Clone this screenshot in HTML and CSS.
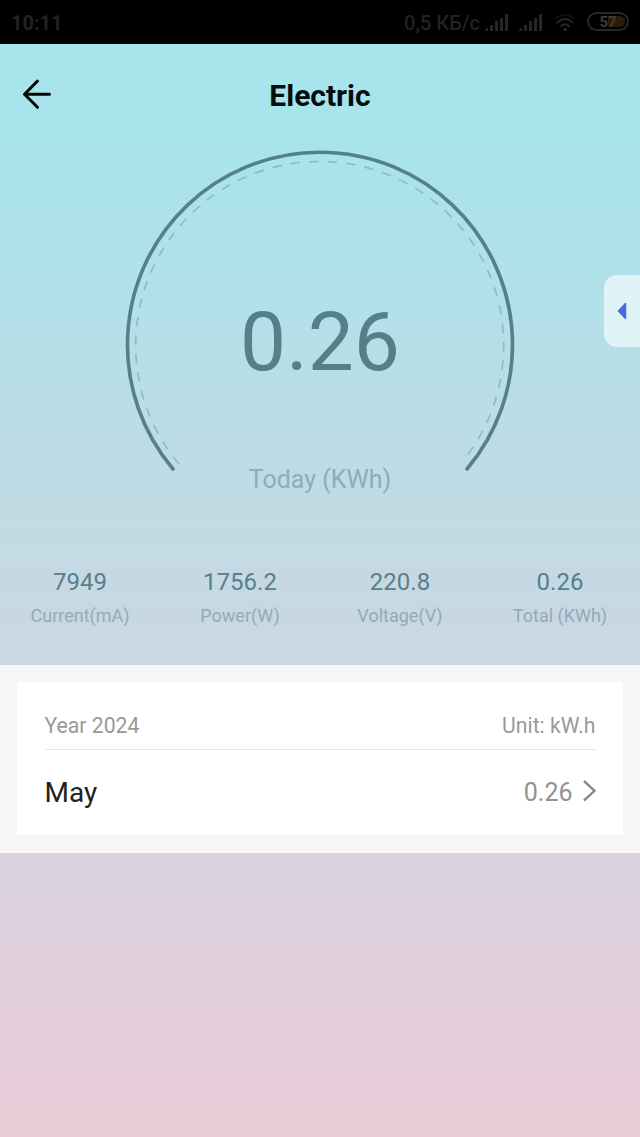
FILE: index.html
```html
<!DOCTYPE html>
<html>
<head>
<meta charset="utf-8">
<meta name="viewport" content="width=device-width, initial-scale=1">
<title>Electric</title>
<link rel="stylesheet" href="styles.css">
</head>
<body>

<div class="status">
  <span class="time">10:11</span>
  <span class="speed">0,5 КБ/с</span>
  <svg class="signal" width="26" height="18" viewBox="0 0 26 18">
    <path d="M0 17l4-4v4zM6 11h3v6H6zM11 7h3v10h-3zM16 4h3v13h-3zM21 0h3v17h-3z"/>
  </svg>
  <svg class="signal second" width="26" height="18" viewBox="0 0 26 18">
    <path d="M0 17l4-4v4zM6 11h3v6H6zM11 7h3v10h-3zM16 4h3v13h-3zM21 0h3v17h-3z"/>
  </svg>
  <svg class="wifi" width="22" height="18" viewBox="0 0 22 18">
    <path class="faint" d="M1 5Q11-3 21 5"/>
    <path d="M3 9Q11 1 19 9M6.500 12.500Q11 8 15.500 12.500"/>
    <circle cx="11" cy="15.500" r="1.700"/>
  </svg>
  <div class="battery"><span class="level">57</span></div>
</div>

<div class="header">
  <svg class="back" width="30" height="32" viewBox="0 0 30 32">
    <path d="M15.500 3L2.500 16.300l13 13M2.500 16.300h25"/>
  </svg>
  <h1>Electric</h1>
</div>

<div class="gauge">
  <svg class="dial" width="400" height="340" viewBox="0 0 400 340">
    <path class="ring" d="M53 323A192.500 192.500 0 1 1 347 323"/>
    <path class="dashes" d="M59 318A184 184 0 1 1 344.500 313"/>
  </svg>
  <div class="today">0.26</div>
  <div class="caption">Today (KWh)</div>
</div>

<ul class="stats">
  <li><b>7949</b><span>Current(mA)</span></li>
  <li><b>1756.2</b><span>Power(W)</span></li>
  <li><b>220.8</b><span>Voltage(V)</span></li>
  <li><b>0.26</b><span>Total (KWh)</span></li>
</ul>

<div class="history">
  <div class="card">
    <div class="year">
      <span>Year 2024</span>
      <span>Unit: kW.h</span>
    </div>
    <div class="month">
      <span class="name">May</span>
      <span class="value">0.26</span>
      <svg class="chevron" width="13" height="22" viewBox="0 0 13 22">
        <path d="M1 1l10.500 9.800L1 20.500"/>
      </svg>
    </div>
  </div>
</div>

<!-- floating side tab -->
<div class="sideTab">
  <svg width="10" height="18" viewBox="0 0 10 18">
    <path d="M8.500 1.500v15L1.500 9z"/>
  </svg>
</div>

</body>
</html>
```
FILE: styles.css
```css
* {
  box-sizing: border-box;
}

body {
  margin: 0;
  height: 1137px;
  overflow: hidden;
  font-family: Roboto, "Liberation Sans", sans-serif;
  background: linear-gradient(#a7e4ec 130px, #ebcbd8 1137px);
}

svg {
  display: block;
  fill: none;
}

/* Status bar */
.status {
  display: flex;
  align-items: center;
  height: 44px;
  padding: 2px 11px 0;
  background: #000;
  color: #222;
  font-size: 20px;
  font-weight: bold;
}

.time {
  flex: 1;
}

.speed {
  font-weight: 500;
}

.signal {
  margin-left: 4px;
  fill: #262626;
}

.signal.second {
  margin-left: 8px;
}

.wifi {
  margin-left: 10px;
  stroke: #272727;
  stroke-width: 2;
}

.wifi circle {
  fill: #272727;
  stroke: none;
}

.wifi .faint {
  stroke: #111;
}

.battery {
  width: 42px;
  height: 19px;
  margin: -3px 0 0 11px;
  padding: 2px;
  border: 2px solid #272727;
  border-radius: 10px;
}

.level {
  display: block;
  height: 11px;
  border-radius: 0 6px 6px 0;
  background: linear-gradient(to right, #000 50%, #2c1b05 50%);
  color: #3a3a3a;
  font-size: 15px;
  line-height: 12px;
  text-align: center;
}

/* Title row */
.header {
  display: grid;
  grid-template-columns: 30px 1fr 30px;
  align-items: center;
  height: 100px;
  padding: 0 22px;
}

.back {
  stroke: #050505;
  stroke-width: 3;
  stroke-linecap: round;
  stroke-linejoin: round;
}

h1 {
  margin: 2px 0 0;
  font-size: 30px;
  font-weight: bold;
  text-align: center;
  color: #050c0e;
}

/* Round gauge with the daily value */
.gauge {
  display: grid;
  justify-items: center;
  height: 410px;
  padding-top: 2px;
  grid-template-rows: 340px;
}

.dial,
.today,
.caption {
  grid-area: 1 / 1;
}

.ring {
  stroke: #568089;
  stroke-width: 3.600;
  stroke-linecap: round;
}

.dashes {
  stroke: #8fb9c0;
  stroke-width: 1.600;
  stroke-dasharray: 9.500 9;
}

.today {
  margin-top: 146px;
  color: #568089;
  font-size: 82px;
  line-height: 100px;
}

.caption {
  margin-top: 319px;
  color: #8dadb7;
  font-size: 25px;
  line-height: 30px;
}

/* Four readings */
.stats {
  display: grid;
  grid-template-columns: repeat(4, 1fr);
  height: 111px;
  margin: 0;
  padding: 14px 0 0;
  list-style: none;
  text-align: center;
}

.stats b,
.stats span {
  display: block;
}

.stats b {
  color: #568089;
  font-size: 24px;
  font-weight: normal;
  line-height: 28px;
}

.stats span {
  margin-top: 8px;
  color: #93abb6;
  font-size: 18px;
  line-height: 24px;
}

/* Monthly list */
.history {
  height: 188px;
  padding: 17px;
  background: #f6f6f6;
}

.card {
  height: 153px;
  padding: 20px 27.500px 0;
  background: #fff;
}

.year,
.month {
  display: flex;
  align-items: center;
}

.year {
  justify-content: space-between;
  height: 48px;
  border-bottom: 1px solid #e6e6e6;
  color: #999;
  font-size: 21.200px;
}

.month {
  height: 85px;
}

.name {
  flex: 1;
  color: #222;
  font-size: 28px;
}

.value {
  color: #929292;
  font-size: 25px;
}

.chevron {
  margin: -3px 0 0 10px;
  stroke: #8c8c8c;
  stroke-width: 2.400;
}

.sideTab {
  position: absolute;
  top: 275px;
  right: 0;
  display: flex;
  align-items: center;
  width: 36px;
  height: 72px;
  padding-left: 13px;
  border-radius: 13px 0 0 13px;
  background: #e0f3f7;
}

.sideTab path {
  fill: #4c68e2;
  stroke: #4c68e2;
  stroke-width: 1.500;
  stroke-linejoin: round;
}
```
